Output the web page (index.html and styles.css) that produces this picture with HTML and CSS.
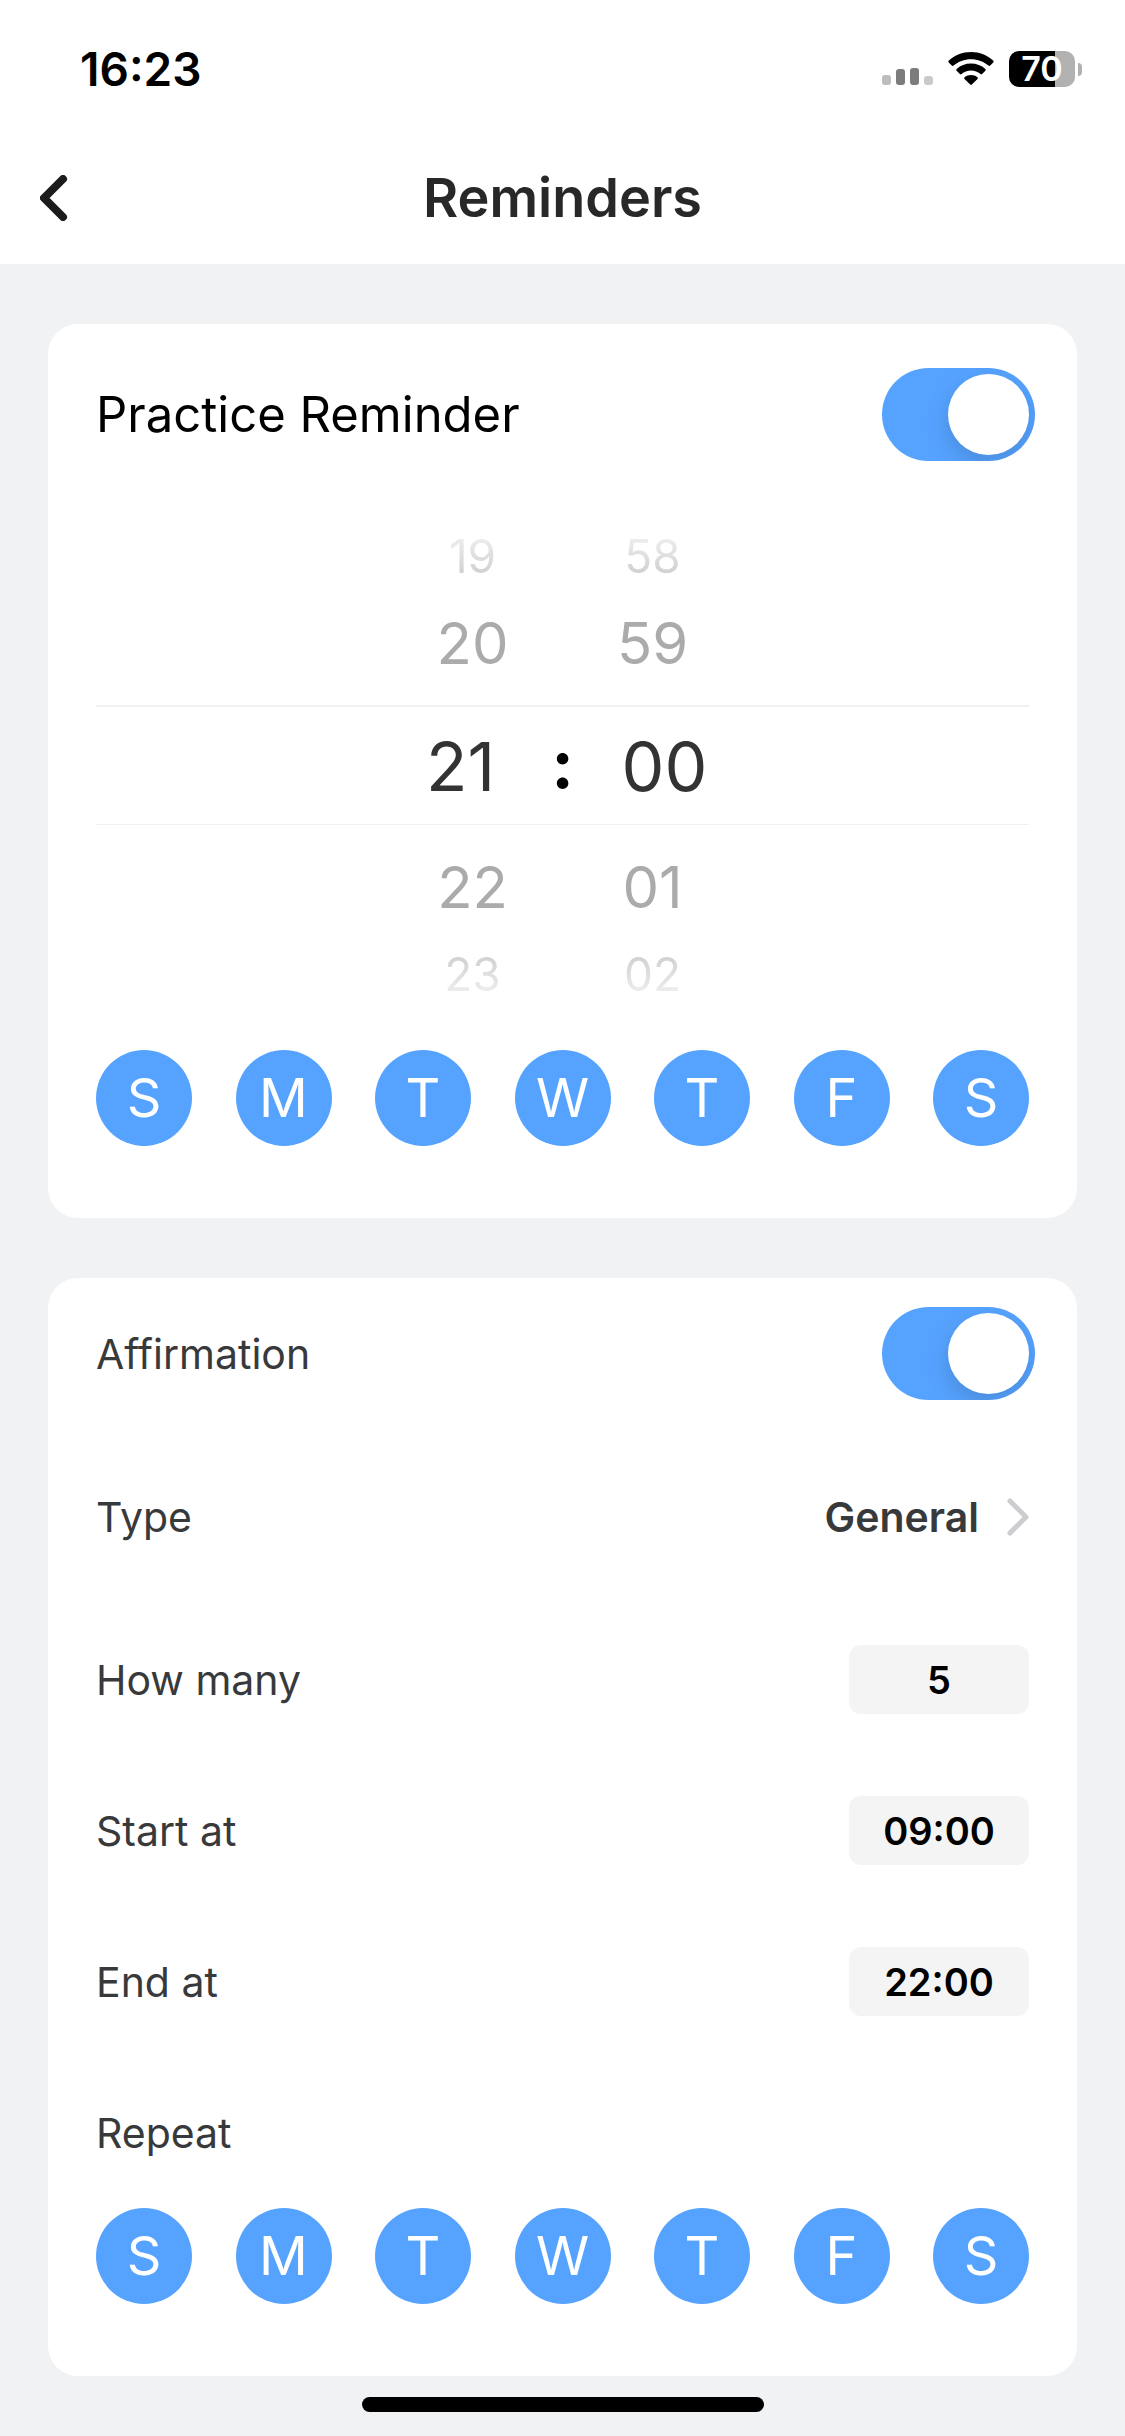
FILE: index.html
```html
<!DOCTYPE html>
<html lang="en">
<head>
<meta charset="utf-8">
<meta name="viewport" content="width=device-width, initial-scale=1">
<title>Reminders</title>
<link rel="stylesheet" href="styles.css">
</head>
<body>
<header class="header">
  <div class="status">
    <span class="status-time">16:23</span>
    <div class="status-icons">
      <svg class="signal" width="51" height="36" viewBox="0 0 51 36" aria-hidden="true">
        <rect x="0" y="24" width="9" height="10" rx="3" fill="#bdbdbd"/>
        <rect x="14" y="18" width="9" height="16" rx="3" fill="#7c7c7c"/>
        <rect x="28" y="17" width="9" height="17" rx="3" fill="#7c7c7c"/>
        <rect x="42" y="25" width="9" height="9" rx="3" fill="#cacaca"/>
      </svg>
      <svg class="wifi" width="46" height="36" viewBox="0 0 46 36" aria-hidden="true">
        <path d="M23 1C14.400 1 6.600 4.200.8 9.600C.2 10.200.2 10.900.7 11.400L3.800 14.600C4.300 15.100 5 15.100 5.600 14.600C10.200 10.500 16.300 8.200 23 8.200S35.800 10.500 40.400 14.600C41 15.100 41.700 15.100 42.200 14.600L45.300 11.400C45.800 10.900 45.800 10.200 45.200 9.600C39.400 4.200 31.600 1 23 1Z"/>
        <path d="M23 12.600C17.500 12.600 12.500 14.600 8.700 18C8.100 18.500 8.100 19.200 8.600 19.700L11.900 23C12.400 23.500 13 23.500 13.600 23C16.100 20.900 19.400 19.600 23 19.600S29.900 20.900 32.400 23C33 23.500 33.600 23.500 34.100 23L37.400 19.700C37.900 19.200 37.900 18.500 37.300 18C33.500 14.600 28.500 12.600 23 12.600Z"/>
        <path d="M23 24C20.500 24 18.300 24.800 16.600 26.200C16 26.700 16 27.400 16.500 27.900L22.200 33.500C22.700 34 23.300 34 23.800 33.500L29.500 27.900C30 27.400 30 26.700 29.400 26.200C27.700 24.800 25.500 24 23 24Z"/>
      </svg>
      <div class="battery"><span class="battery-body">70</span><span class="battery-tip"></span></div>
    </div>
  </div>
  <nav class="nav">
    <button class="back" type="button" aria-label="Back">
      <svg width="28" height="46" viewBox="0 0 28 46" aria-hidden="true"><path d="M23 4 4 23 23 42" fill="none" stroke="#1c1c1c" stroke-width="8" stroke-linecap="round" stroke-linejoin="round"/></svg>
    </button>
    <h1 class="title">Reminders</h1>
  </nav>
</header>
<main class="main">
  <section class="card">
    <div class="row row-lead">
      <label class="lead" for="practice">Practice Reminder</label>
      <input class="toggle" id="practice" type="checkbox" role="switch" checked>
    </div>
    <div class="picker" role="group" aria-label="Practice time">
      <div class="pick far above"><button type="button">19</button><button type="button">58</button></div>
      <div class="pick near"><button type="button">20</button><button type="button">59</button></div>
      <div class="pick current"><button type="button">21</button><span class="colon">:</span><button type="button">00</button></div>
      <div class="pick near"><button type="button">22</button><button type="button">01</button></div>
      <div class="pick far below"><button type="button">23</button><button type="button">02</button></div>
    </div>
    <div class="days" role="group" aria-label="Practice days">
      <button class="day" type="button" aria-pressed="true">S</button>
      <button class="day" type="button" aria-pressed="true">M</button>
      <button class="day" type="button" aria-pressed="true">T</button>
      <button class="day" type="button" aria-pressed="true">W</button>
      <button class="day" type="button" aria-pressed="true">T</button>
      <button class="day" type="button" aria-pressed="true">F</button>
      <button class="day" type="button" aria-pressed="true">S</button>
    </div>
  </section>
  <section class="card">
    <div class="row">
      <label for="affirmation">Affirmation</label>
      <input class="toggle" id="affirmation" type="checkbox" role="switch" checked>
    </div>
    <div class="row row-type">
      <span id="type-label">Type</span>
      <button class="choice" type="button" aria-describedby="type-label">General
        <svg width="22" height="38" viewBox="0 0 22 38" aria-hidden="true"><path d="M3 3 19 19 3 35" fill="none" stroke="#cbcdd1" stroke-width="5" stroke-linecap="round" stroke-linejoin="round"/></svg>
      </button>
    </div>
    <div class="row">
      <label for="count">How many</label>
      <input class="value" id="count" type="text" inputmode="numeric" value="5">
    </div>
    <div class="row">
      <label for="start">Start at</label>
      <input class="value" id="start" type="text" value="09:00">
    </div>
    <div class="row">
      <label for="end">End at</label>
      <input class="value" id="end" type="text" value="22:00">
    </div>
    <div class="row"><span id="repeat-label">Repeat</span></div>
    <div class="days" role="group" aria-labelledby="repeat-label">
      <button class="day" type="button" aria-pressed="true">S</button>
      <button class="day" type="button" aria-pressed="true">M</button>
      <button class="day" type="button" aria-pressed="true">T</button>
      <button class="day" type="button" aria-pressed="true">W</button>
      <button class="day" type="button" aria-pressed="true">T</button>
      <button class="day" type="button" aria-pressed="true">F</button>
      <button class="day" type="button" aria-pressed="true">S</button>
    </div>
  </section>
</main>
<div class="home-bar"></div>
</body>
</html>
```
FILE: styles.css
```css
* { box-sizing: border-box; }

body {
  margin: 0;
  background: #f0f2f4;
  color: #38393b;
  font-family: Inter, "Liberation Sans", sans-serif;
  font-size: 41px;
  line-height: 48px;
}

button, input {
  margin: 0;
  padding: 0;
  border: 0;
  background: none;
  color: inherit;
  font: inherit;
}

svg { display: block; }

.header { background: #fff; }

.status {
  display: flex;
  align-items: center;
  justify-content: space-between;
  height: 138px;
  padding: 0 43px 0 80px;
}

.status-time {
  color: #000;
  font-size: 46px;
  font-weight: 600;
}

.status-icons {
  display: flex;
  align-items: center;
  gap: 15px;
}

.battery {
  display: flex;
  align-items: center;
  gap: 3px;
}

.battery-body {
  width: 66px;
  height: 36px;
  border-radius: 10px;
  background: linear-gradient(90deg, #000 70%, #b1b1b1 70%);
  color: #fff;
  font-size: 34px;
  font-weight: 600;
  line-height: 36px;
  text-align: center;
}

.battery-tip {
  width: 4px;
  height: 13px;
  border-radius: 0 6px 6px 0;
  background: #b1b1b1;
}

.nav {
  display: grid;
  grid-template-columns: 80px 1fr 80px;
  align-items: center;
  height: 126px;
  padding-bottom: 6px;
}

.back { padding-left: 40px; }

.title {
  margin: 0;
  color: #282828;
  font-size: 54px;
  font-weight: 600;
  line-height: 64px;
  text-align: center;
}

.main {
  display: grid;
  gap: 60px;
  padding: 60px 48px 0;
}

.card {
  padding: 0 48px 72px;
  border-radius: 30px;
  background: #fff;
}

.row {
  display: flex;
  align-items: center;
  justify-content: space-between;
  height: 151px;
}

.row-lead { height: 181px; }
.row-type { height: 175px; }

.lead {
  color: #000;
  font-size: 49px;
}

.toggle {
  appearance: none;
  width: 153px;
  height: 93px;
  margin-right: -6px;
  padding: 6px;
  border-radius: 47px;
  background: #a9abae;
  overflow: hidden;
}

.toggle::before {
  content: "";
  display: block;
  width: 81px;
  height: 81px;
  border-radius: 50%;
  background: #fff;
  box-shadow: 0 9px 24px rgba(0, 0, 0, 0.15);
}

.toggle:checked { background: #56a3ff; }
.toggle:checked::before { margin-left: auto; }

.picker {
  display: grid;
  margin: 15px 0 40px;
}

.pick {
  display: grid;
  grid-template-columns: 180px 180px;
  justify-content: center;
  align-items: center;
}

.far {
  height: 72px;
  color: transparent;
  background-clip: text;
  -webkit-background-clip: text;
  font-size: 46px;
}

.above { background-image: linear-gradient(#f0f0f0 20%, #cdcdcd 80%); }
.below { background-image: linear-gradient(#cdcdcd 20%, #f0f0f0 80%); }

.near {
  height: 102px;
  color: #ababab;
  font-size: 58px;
}

.current {
  grid-template-columns: 180px 24px 180px;
  height: 120px;
  margin: 11px 0;
  border-top: 2px solid #f0f0f0;
  border-bottom: 1px solid #f0f0f0;
  color: #333;
  font-size: 68px;
}

.colon {
  color: #000;
  font-weight: 700;
  line-height: 40px;
  text-align: center;
  padding-bottom: 6px;
}

.days {
  display: flex;
  justify-content: space-between;
}

.day {
  width: 96px;
  height: 96px;
  border-radius: 50%;
  background: #e4e6e8;
  font-size: 54px;
}

.day[aria-pressed="true"] {
  background: #56a3ff;
  color: #fff;
}

.choice {
  display: flex;
  align-items: center;
  gap: 28px;
  font-weight: 600;
}

.value {
  width: 180px;
  height: 69px;
  border-radius: 12px;
  background: #f4f4f4;
  color: #000;
  font-size: 38px;
  font-weight: 600;
  text-align: center;
}

.home-bar {
  width: 402px;
  max-width: 60%;
  height: 15px;
  margin: 21px auto 24px;
  border-radius: 8px;
  background: #000;
}
```
